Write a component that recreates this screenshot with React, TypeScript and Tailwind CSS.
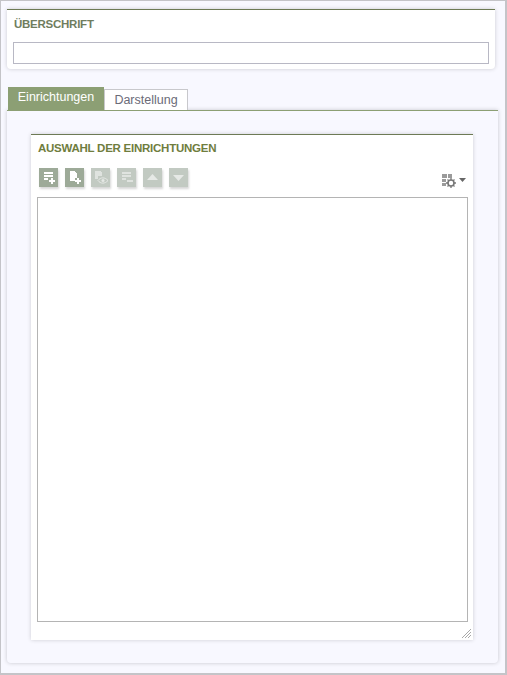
import { ReactNode } from 'react';

function ToolButton({ children, disabled }: { children: ReactNode; disabled?: boolean }) {
  return (
    <div
      className={`w-[19px] h-[19px] flex items-center justify-center shadow-[1px_2px_2px_rgba(0,0,0,0.16)] ${
        disabled ? 'bg-[#c2cac2]' : 'bg-[#9daa98]'
      }`}
    >
      {children}
    </div>
  );
}

function Glyph({ children }: { children: ReactNode }) {
  return (
    <svg width="19" height="19" viewBox="0 0 19 19" shapeRendering="crispEdges">
      {children}
    </svg>
  );
}

function Plus({ x, y, color = '#fff' }: { x: number; y: number; color?: string }) {
  return <path d={`M${x + 2} ${y}h2v2h2v2h-2v2h-2v-2h-2v-2h2z`} fill={color} />;
}

function ToolsIcon() {
  return (
    <svg width="24" height="14" viewBox="0 0 24 14">
      <path d="M0 0h5v4H0zM6 0h4v4H6zM0 5h4v3H0zM0 9h4v3H0z" fill="#9a9a9a" />
      <circle cx="9" cy="9" r="3" fill="#fff" stroke="#777" strokeWidth="1.600" />
      <path
        d="M9 4v2M9 12v2M4 9h2M12 9h2M5.500 5.500l1.400 1.400M11.100 11.100l1.400 1.400M12.500 5.500l-1.400 1.400M6.900 11.100l-1.400 1.400"
        stroke="#777"
        strokeWidth="1.300"
      />
      <path d="M17 4h7l-3.500 4z" fill="#666" />
    </svg>
  );
}

export default function App() {
  return (
    <div className="w-[507px] h-[675px] bg-[#f8f8ff] border-t border-l border-r-2 border-b-2 border-[#c4c4c8] pt-2 pl-1.5 pr-2 font-['Liberation_Sans',Arial,sans-serif]">
      <section className="w-[488px] h-[60px] bg-white border-t border-[#6d7a55] rounded-b-sm shadow-[0_0_4px_rgba(0,0,0,0.18)] pt-[7px] px-1.5">
        <h2 className="text-[11.5px] tracking-[-0.25px] leading-[14px] font-bold text-[#6f7d5e] pl-px">ÜBERSCHRIFT</h2>
        <input className="block w-[476px] h-[22px] mt-[11px] bg-white border border-[#b8b8c4] outline-none" />
      </section>

      <div className="flex items-end h-[23px] mt-[18px] ml-px">
        <div className="w-[96px] h-[23px] bg-[#8c9f74] text-white text-[12.5px] leading-[21px] text-center">Einrichtungen</div>
        <div className="w-[84px] h-[21px] bg-white border border-b-0 border-[#c8c8cc] text-[#6b6b78] text-[12.5px] leading-[20px] text-center">
          Darstellung
        </div>
      </div>

      <section className="w-[491px] h-[553px] border-t border-[#8c9f74] rounded-b-sm shadow-[0_0_4px_rgba(0,0,0,0.2)] pt-[23px] pl-6">
        <div className="relative w-[442px] h-[506px] bg-white border-t border-[#6d7a55] shadow-[0_0_4px_rgba(0,0,0,0.18)] pt-[6px] px-1.5">
          <h3 className="text-[11.5px] tracking-[-0.25px] leading-[14px] font-bold text-[#6f7d3e] pl-px">AUSWAHL DER EINRICHTUNGEN</h3>

          <div className="flex h-[19px] mt-[13px] ml-[2px] pr-px">
            <div className="flex gap-[7px]">
              <ToolButton>
                <Glyph>
                  <path d="M5 4h9v2H5zM5 7h9v2H5zM5 10h4v2H5z" fill="#fff" />
                  <Plus x={10} y={10} />
                </Glyph>
              </ToolButton>
              <ToolButton>
                <Glyph>
                  <path d="M5 3h4l3 3v4h-2v3H5z" fill="#fff" />
                  <Plus x={10} y={10} />
                </Glyph>
              </ToolButton>
              <ToolButton disabled>
                <Glyph>
                  <path d="M4 3h5l2 2v3H7v3H4z" fill="#dfe3df" />
                  <path d="M7 12.500c2.500-3.500 7-3.500 10 0-3 3.500-7.500 3.500-10 0z" fill="none" stroke="#e6e9e6" shapeRendering="auto" />
                  <circle cx="12" cy="12.500" r="1.500" fill="#e6e9e6" shapeRendering="auto" />
                </Glyph>
              </ToolButton>
              <ToolButton disabled>
                <Glyph>
                  <path d="M5 4h9v2H5zM5 7h9v2H5zM5 10h4v2H5zM10 12h6v2h-6z" fill="#dfe3df" />
                </Glyph>
              </ToolButton>
              <ToolButton disabled>
                <Glyph>
                  <path d="M9.500 6 15 12H4z" fill="#e6e9e6" shapeRendering="auto" />
                </Glyph>
              </ToolButton>
              <ToolButton disabled>
                <Glyph>
                  <path d="M4 7h11l-5.500 6z" fill="#e6e9e6" shapeRendering="auto" />
                </Glyph>
              </ToolButton>
            </div>
            <div className="ml-auto mt-[6px] h-[13px]">
              <ToolsIcon />
            </div>
          </div>

          <div className="w-[431px] h-[425px] mt-[10px] bg-white border border-[#b4b4b4]" />

          <svg className="absolute right-0.5 bottom-0.5" width="9" height="9" viewBox="0 0 9 9">
            <path d="M0 9 9 0M3 9l6-6M6 9l3-3" stroke="#a8a8a8" strokeWidth="1" />
          </svg>
        </div>
      </section>
    </div>
  );
}
